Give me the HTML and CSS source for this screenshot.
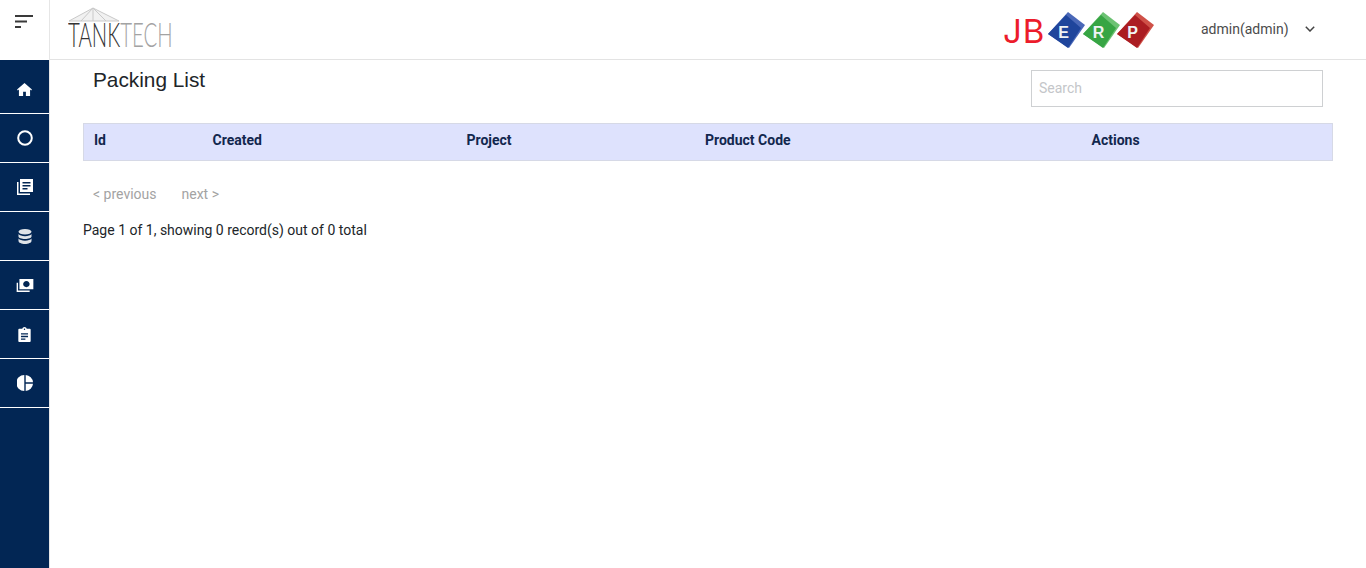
FILE: index.html
```html
<!DOCTYPE html>
<html lang="en">
<head>
<meta charset="utf-8">
<title>Packing List</title>
<link rel="stylesheet" href="styles.css">
</head>
<body>
<div class="app">
  <aside class="sidebar">
    <div class="burger">
      <svg width="18" height="14" viewBox="0 0 18 14"><path d="M0 1h18M0 6.500h12M0 12h6" stroke="#3a3a3a" stroke-width="2" fill="none"/></svg>
    </div>
    <nav class="menu">
      <a class="item"><svg width="15" height="13" viewBox="0 0 16 14"><path fill="#fff" d="M8 0 0 7l.8 1L2 7v7h4.500V9.500h3V14H14V7l1.200 1 .8-1z"/></svg></a>
      <a class="item"><svg width="16" height="16" viewBox="0 0 16 16"><circle cx="8" cy="8" r="6.800" fill="none" stroke="#fff" stroke-width="2"/></svg></a>
      <a class="item"><svg width="16" height="16" viewBox="0 0 16 16"><path fill="#fff" d="M0 3h1.500v11.500H13V16H0z"/><path fill="#fff" fill-rule="evenodd" d="M3 0h13v13H3zM5.500 3v1.500h8V3zm0 3v1.500h8V6zm0 3v1.500h5V9z"/></svg></a>
      <a class="item"><svg width="14" height="15" viewBox="0 0 14 15"><ellipse cx="7" cy="2.800" rx="6.500" ry="2.800" fill="#dfe3e8"/><path fill="#dfe3e8" d="M.5 5c1 1.400 3.500 2.200 6.500 2.200S12.500 6.400 13.500 5v2.500C13.500 9 10.500 10 7 10S.5 9 .5 7.500zM.5 9.500c1 1.400 3.500 2.200 6.500 2.200s5.500-.8 6.500-2.200V12c0 1.600-3 3-6.500 3S.5 13.600.5 12z"/></svg></a>
      <a class="item"><svg width="18" height="13" viewBox="0 0 18 14"><path fill="#fff" d="M0 4h1.500v8.500H14V14H0z"/><path fill="#fff" fill-rule="evenodd" d="M3 0h15v11H3zM10.500 2.200c-2 0-3.500 1.500-3.500 3.300s1.500 3.300 3.500 3.300S14 7.300 14 5.500s-1.500-3.300-3.500-3.300z"/></svg></a>
      <a class="item"><svg width="13" height="15" viewBox="0 0 14 17"><path fill="#fff" fill-rule="evenodd" d="M1 2h3.500C4.800.8 5.800 0 7 0s2.200.8 2.500 2H13a1 1 0 0 1 1 1v13a1 1 0 0 1-1 1H1a1 1 0 0 1-1-1V3a1 1 0 0 1 1-1zM6.200 2.500a.8.800 0 1 0 1.600 0 .8.800 0 0 0-1.600 0zM3 7v1.500h8V7zm0 3v1.500h8V10zm0 3v1.500h5V13z"/></svg></a>
      <a class="item"><svg width="16" height="16" viewBox="0 0 16 16"><path fill="#fff" d="M7.300 0v16A8 8 0 0 1 7.300 0zM8.700 0A8 8 0 0 1 16 7.300H8.700zM8.700 8.700H16A8 8 0 0 1 8.700 16z"/></svg></a>
    </nav>
  </aside>
  <div class="main">
    <header class="topbar">
      <div class="tank-logo">
        <svg class="roof" width="52" height="16" viewBox="0 0 52 16"><path d="M25 1 51 14H1z" fill="#f1f1f1"/><path d="M1 14 25 1l26 13zM25 1v13M13 14 25 1l13 13" fill="none" stroke="#c9c9c9" stroke-width="1"/></svg>
        <span class="wordmark"><span class="tank">TANK</span><span class="tech">TECH</span></span>
      </div>
      <div class="top-right">
        <div class="jb-logo">
          <span class="jb">JB</span>
          <svg class="gem" width="38" height="37" viewBox="0 0 38 37"><path fill="#4a68b8" d="M20 0 37 13 21 36 0 22z"/><path fill="#1f459c" d="M18 3 33 16 20 36 0 22z"/><text x="15.500" y="26">E</text></svg>
          <svg class="gem" width="38" height="37" viewBox="0 0 38 37"><path fill="#6cc273" d="M20 0 37 13 21 36 0 22z"/><path fill="#37a544" d="M18 3 33 16 20 36 0 22z"/><text x="15.500" y="26">R</text></svg>
          <svg class="gem" width="38" height="37" viewBox="0 0 38 37"><path fill="#cf5148" d="M20 0 37 13 21 36 0 22z"/><path fill="#ab1d22" d="M18 3 33 16 20 36 0 22z"/><text x="15.500" y="26">P</text></svg>
        </div>
        <div class="user">
          <span>admin(admin)</span>
          <svg width="10" height="6" viewBox="0 0 10 6"><path d="M.8.800 5 5 9.200.8" fill="none" stroke="#444" stroke-width="1.500"/></svg>
        </div>
      </div>
    </header>
    <main class="content">
      <div class="head-row">
        <h1>Packing List</h1>
        <input class="search" type="text" placeholder="Search">
      </div>
      <div class="thead">
        <div>Id</div>
        <div>Created</div>
        <div>Project</div>
        <div>Product Code</div>
        <div>Actions</div>
      </div>
      <div class="pager"><span>&lt; previous</span><span>next &gt;</span></div>
      <p class="count">Page 1 of 1, showing 0 record(s) out of 0 total</p>
    </main>
  </div>
</div>
</body>
</html>
```
FILE: styles.css
```css
* { box-sizing: border-box; }
html, body { margin: 0; height: 100%; background: #fff; overflow: hidden; }
body { font-family: Roboto, "Liberation Sans", sans-serif; font-size: 14px; color: #212529; }
.app { display: flex; height: 568px; }
.sidebar { width: 50px; flex: none; display: flex; flex-direction: column; border-right: 1px solid #e6e6e6; }
.burger { height: 60px; padding: 15px 0 0 15px; background: #fff; }
.burger svg { display: block; }
.menu { flex: 1; background: #022654; width: 49px; padding-top: 5px; }
.item { height: 49px; display: flex; align-items: center; justify-content: center; border-bottom: 1px solid #fff; }
.main { flex: 1; min-width: 0; }
.topbar { height: 60px; border-bottom: 1px solid #e3e3e3; display: flex; justify-content: space-between; padding-left: 18px; }
.tank-logo { position: relative; padding-top: 18px; width: 110px; white-space: nowrap; }
.tank-logo .roof { position: absolute; left: 0; top: 7px; }
.wordmark { display: inline-block; font-family: Lato, "Liberation Sans", sans-serif; font-weight: 300; font-size: 34px; line-height: 32px; transform: scaleX(.6); transform-origin: left top; }
.tank { color: #333; }
.tech { color: #a3a3a3; }
.top-right { display: flex; align-items: flex-start; }
.jb-logo { display: flex; align-items: center; height: 60px; width: 198px; padding-top: 1px; }
.jb { font-family: Inter, "Liberation Sans", sans-serif; font-weight: 400; font-size: 33px; letter-spacing: 1px; line-height: 60px; color: #ec1c2b; width: 45px; flex: none; }
.gem { flex: none; margin-right: -3.500px; }
.gem text { fill: #f0f3f5; font-family: "Liberation Sans", sans-serif; font-weight: 700; font-size: 16px; text-anchor: middle; }
.user { display: flex; align-items: center; gap: 16px; height: 58px; width: 165px; color: #4b4b4b; font-size: 14px; }
.content { padding: 0 33px; }
.head-row { display: flex; justify-content: space-between; align-items: flex-start; height: 63px; padding: 9px 10px 0; }
h1 { margin: 0; font-family: "Liberation Sans", sans-serif; font-size: 20.800px; font-weight: 400; line-height: 22px; color: #212529; }
.search { width: 292px; height: 37px; margin-top: 1px; border: 1px solid #ced0d2; padding: 0 7px 2px; font: 14px Roboto, sans-serif; outline: none; border-radius: 0; }
.search::placeholder { color: #c4c6c9; }
.thead { height: 38px; display: grid; grid-template-columns: 118.500px 254px 238.500px 386.500px 1fr; align-items: center; background: #dee2fd; border: 1px solid #d6d9e6; padding: 0 0 5px 10px; font-weight: 700; font-size: 14px; color: #12274e; }
.pager { display: flex; gap: 25px; padding: 25px 0 0 10px; color: #a3a3a3; line-height: 17px; }
.count { margin: 19px 0 0; line-height: 17px; color: #212529; }
```
